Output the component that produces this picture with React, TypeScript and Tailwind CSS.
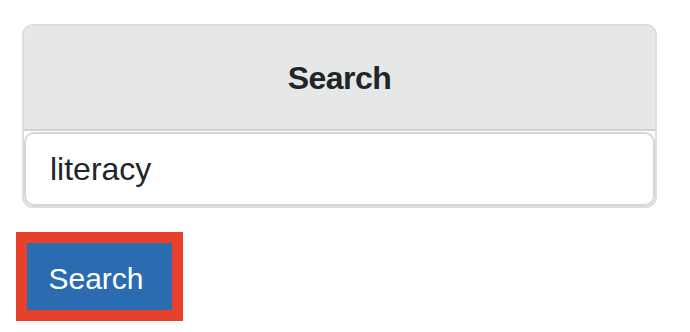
import React from "react";

const App = () => {
  return (
    <div
      className="w-[690px] h-[332px] bg-white pt-[24px]"
      style={{ fontFamily: '"Liberation Sans", Arial, sans-serif' }}
    >
      <div className="ml-[22px] w-[635px] h-[184px] border-2 border-[#dcdddd] rounded-[11px] overflow-hidden flex flex-col">
        <div className="h-[105px] bg-[#e6e7e7] border-b-2 border-[#cfd3d6] flex items-center justify-center">
          <h2 className="text-[32px] font-bold text-[#212529] tracking-[-0.5px]">Search</h2>
        </div>
        <div className="pt-px flex-1 flex">
          <input
            className="flex-1 h-[74px] border-2 border-[#d3d7da] rounded-[10px] pl-[24px] text-[32px] text-[#212529] outline-none bg-white"
            defaultValue="literacy"
          />
        </div>
      </div>
      <div className="mt-[24px] ml-[16px] w-[167px] h-[89px] border-[11px] border-[#e8412b]">
        <button className="w-full h-full bg-[#2b6bb0] text-white text-[30px] flex items-center justify-center pr-[7px] pt-[3px]">
          Search
        </button>
      </div>
    </div>
  );
};

export default App;
